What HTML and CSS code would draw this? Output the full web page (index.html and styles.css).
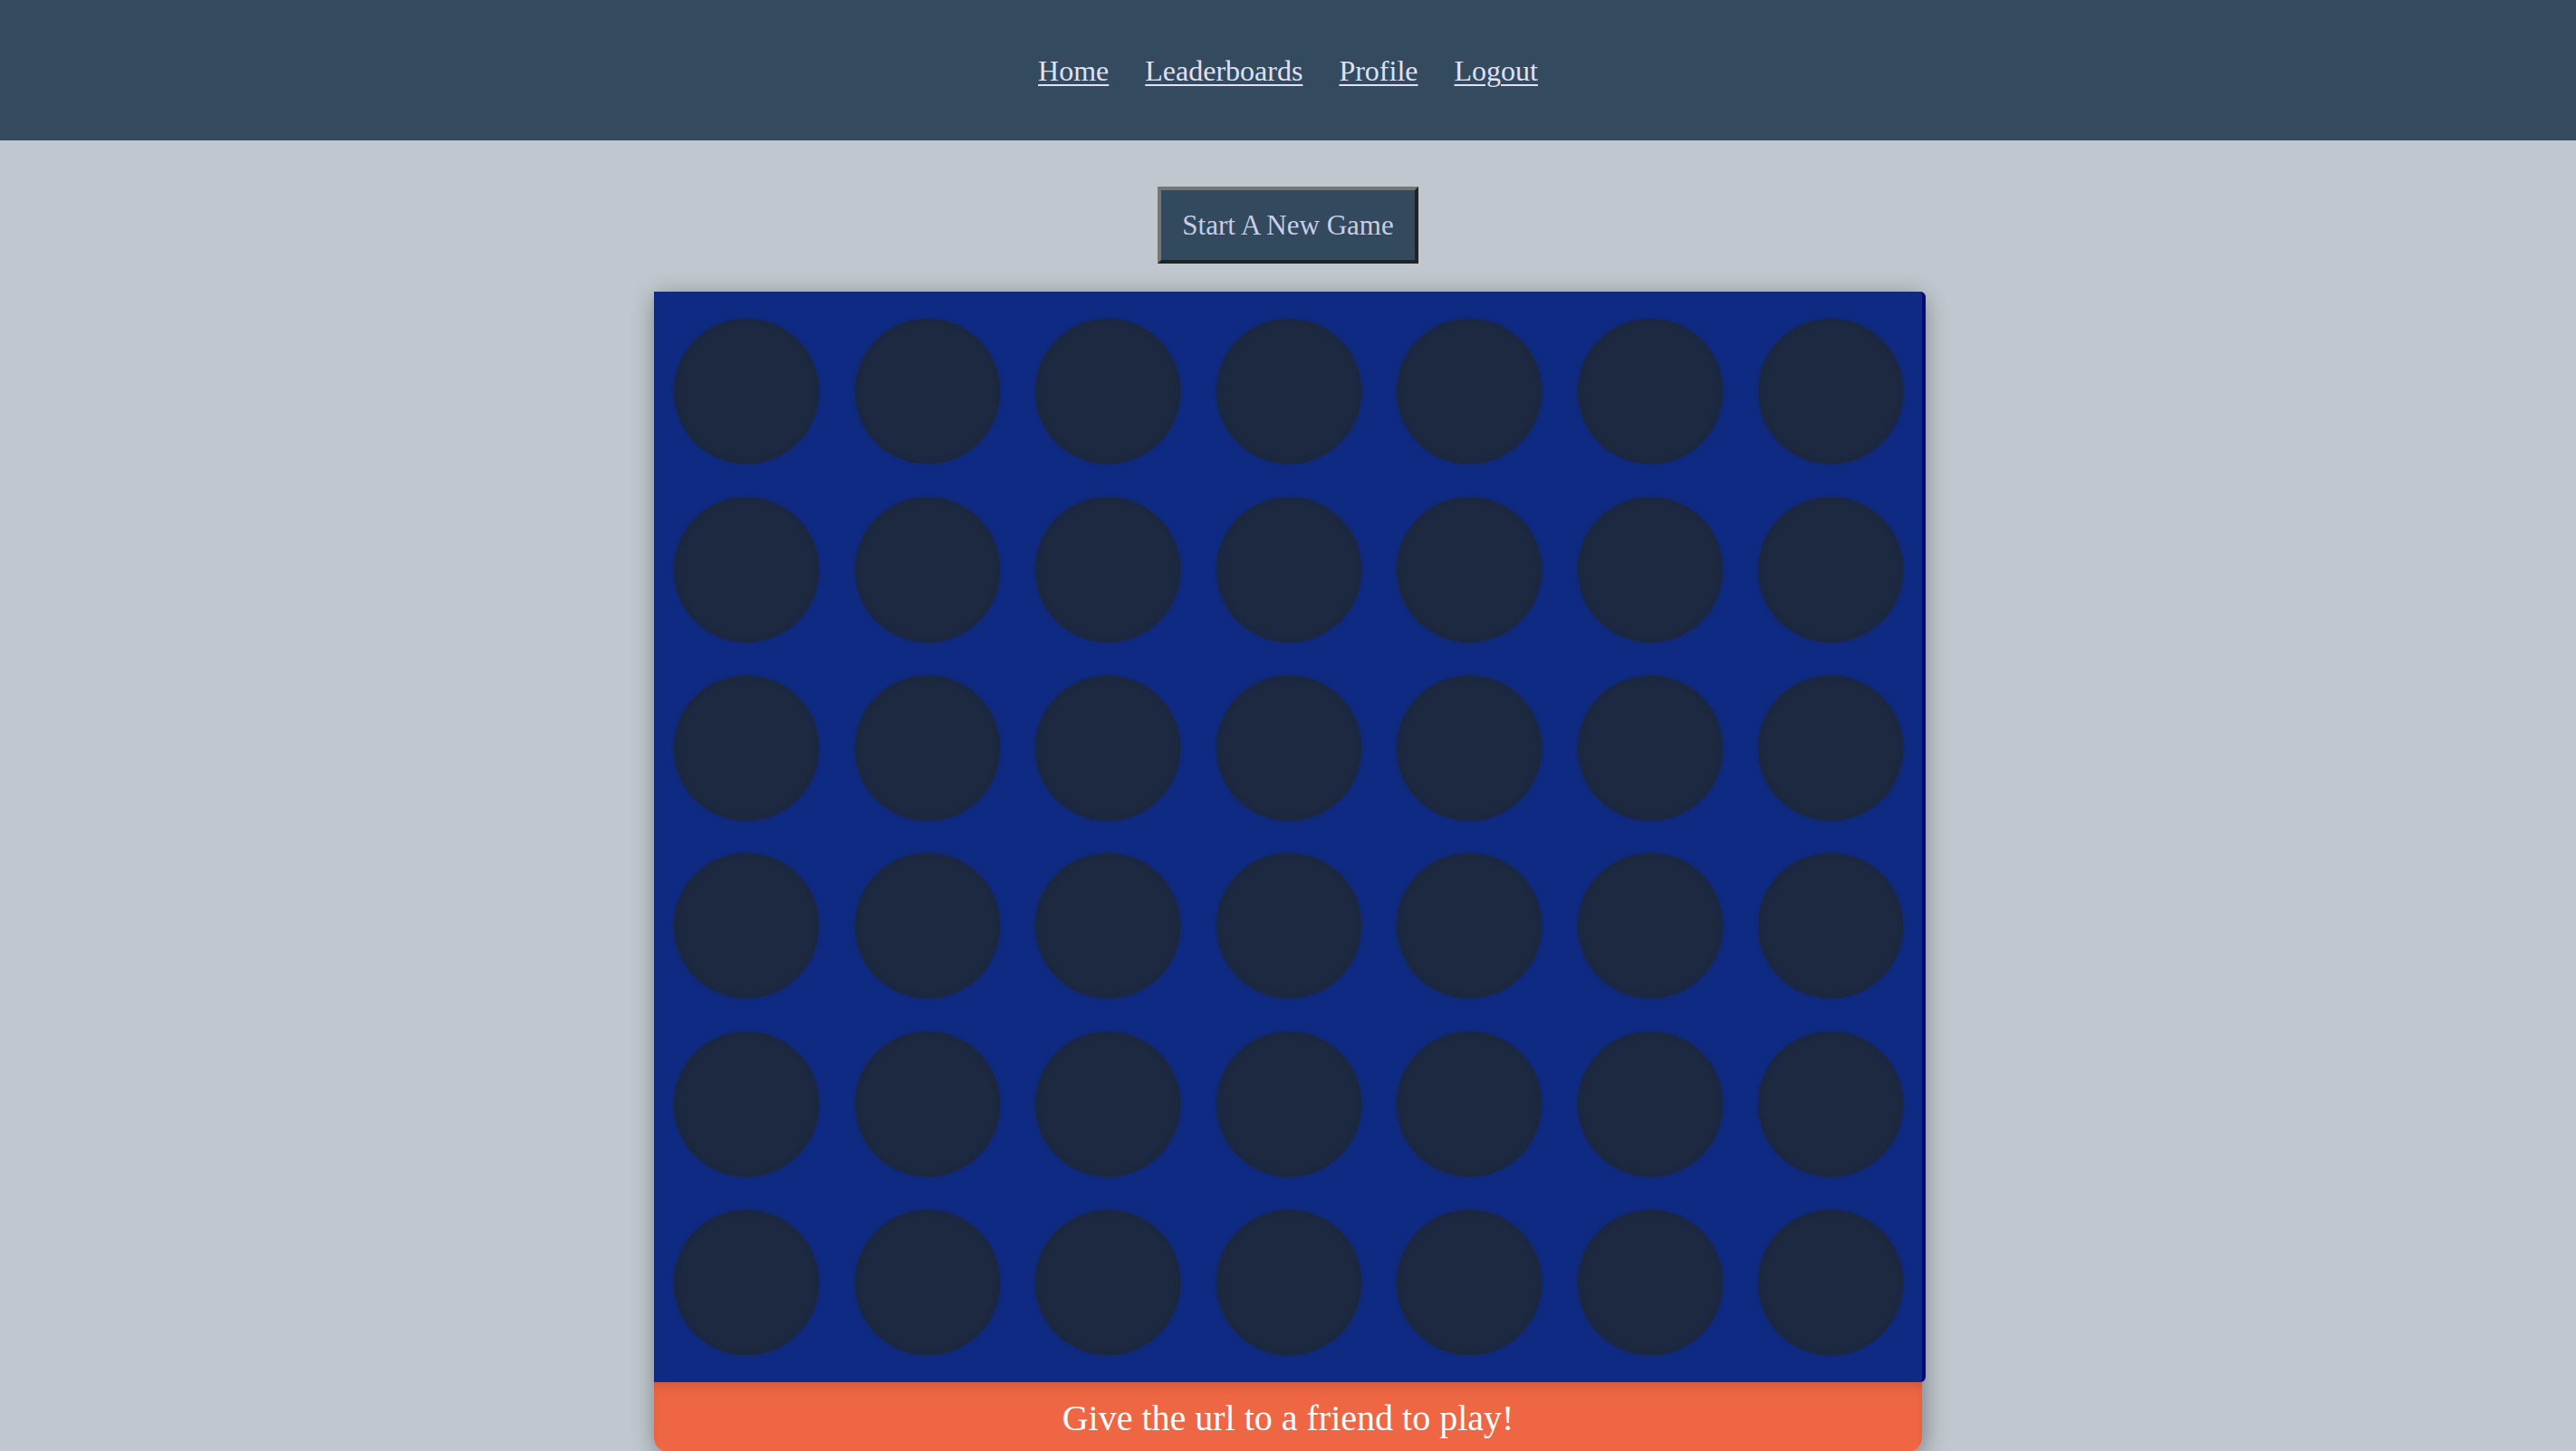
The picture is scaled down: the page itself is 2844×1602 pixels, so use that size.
FILE: index.html
```html
<!DOCTYPE html>
<html lang="en">
<head>
<meta charset="utf-8">
<title>Connect Four</title>
<link rel="stylesheet" href="styles.css">
</head>
<body>
<header class="topbar">
  <nav class="nav">
    <a href="#" class="nav-link">Home</a>
    <a href="#" class="nav-link">Leaderboards</a>
    <a href="#" class="nav-link">Profile</a>
    <a href="#" class="nav-link">Logout</a>
  </nav>
</header>
<main class="main">
  <button class="new-game" type="button">Start A New Game</button>
  <section class="game">
    <div class="board">
      <div class="row"><span class="cell"></span><span class="cell"></span><span class="cell"></span><span class="cell"></span><span class="cell"></span><span class="cell"></span><span class="cell"></span></div>
      <div class="row"><span class="cell"></span><span class="cell"></span><span class="cell"></span><span class="cell"></span><span class="cell"></span><span class="cell"></span><span class="cell"></span></div>
      <div class="row"><span class="cell"></span><span class="cell"></span><span class="cell"></span><span class="cell"></span><span class="cell"></span><span class="cell"></span><span class="cell"></span></div>
      <div class="row"><span class="cell"></span><span class="cell"></span><span class="cell"></span><span class="cell"></span><span class="cell"></span><span class="cell"></span><span class="cell"></span></div>
      <div class="row"><span class="cell"></span><span class="cell"></span><span class="cell"></span><span class="cell"></span><span class="cell"></span><span class="cell"></span><span class="cell"></span></div>
      <div class="row"><span class="cell"></span><span class="cell"></span><span class="cell"></span><span class="cell"></span><span class="cell"></span><span class="cell"></span><span class="cell"></span></div>
    </div>
    <div class="status">Give the url to a friend to play!</div>
  </section>
</main>
</body>
</html>
```

FILE: styles.css
```css
html, body {
  margin: 0;
  padding: 0;
}
body {
  background: #c0c7ce;
  font-family: "Liberation Serif", "Times New Roman", serif;
  overflow: hidden;
}
.topbar {
  height: 155px;
  background: #334a5f;
  display: flex;
  align-items: center;
  justify-content: center;
}
.nav {
  display: flex;
  gap: 40px;
  font-size: 32px;
  line-height: 37px;
  padding-top: 2px;
}
.nav-link {
  color: #dfe2f6;
  text-decoration: underline;
  text-underline-offset: 4px;
  text-decoration-thickness: 2px;
}
.main {
  display: flex;
  flex-direction: column;
  align-items: center;
}
.new-game {
  margin-top: 51px;
  width: 288px;
  height: 85px;
  background: #33495e;
  color: #c7cee7;
  font-family: "Liberation Serif", "Times New Roman", serif;
  font-size: 31px;
  border: 4px solid;
  border-color: #767676 #222 #222 #767676;
  padding: 0;
  cursor: pointer;
}
.game {
  margin-top: 31px;
  width: 1400px;
  border-radius: 0 6px 16px 16px;
  box-shadow: 2px 6px 26px rgba(0, 0, 0, 0.38);
}
.board {
  box-sizing: border-box;
  width: 1404px;
  height: 1204px;
  background: #0f2a82;
  border-right: 4px solid #07097c;
  border-radius: 0 6px 6px 0;
  padding: 30px 21px 30px 22px;
  display: flex;
  flex-direction: column;
  justify-content: space-between;
}
.row {
  display: flex;
  justify-content: space-between;
}
.cell {
  width: 160px;
  height: 160px;
  border-radius: 50%;
  background: #1c2940;
  box-shadow: 0 0 3px 1px rgba(28, 41, 80, 0.7), inset 0 0 6px rgba(20, 30, 60, 0.25);
}
.status {
  box-sizing: border-box;
  width: 1400px;
  height: 77px;
  background: #ee6644;
  color: #ffffff;
  font-size: 40px;
  line-height: 46px;
  padding-top: 17px;
  text-align: center;
  border-radius: 0 0 16px 16px;
  box-shadow: inset 0 10px 12px -6px rgba(120, 40, 10, 0.25);
}
```
